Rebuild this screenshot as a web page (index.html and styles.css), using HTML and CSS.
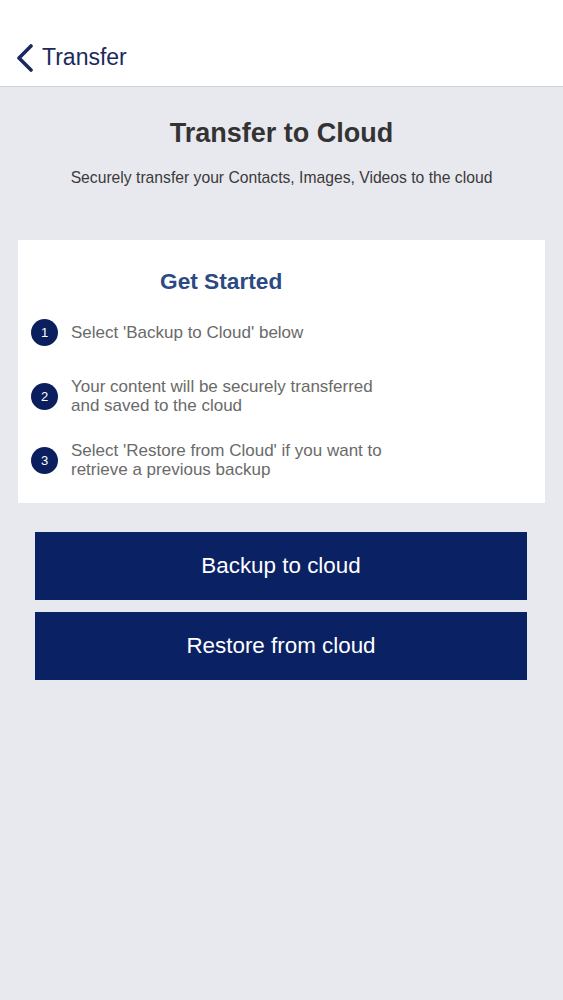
FILE: index.html
```html
<!DOCTYPE html>
<html lang="en">

<head>
    <meta charset="UTF-8">
    <meta name="viewport" content="width=device-width, initial-scale=1.0">
    <title>Transfer to Cloud</title>

    <link rel="stylesheet" href="styles.css">
</head>

<body>
    <header class="topbar">
        <a class="back" href="#">
            <svg viewBox="0 0 18 28" width="18" height="28" stroke="currentColor" stroke-width="3.6" fill="none"
                stroke-linecap="round" stroke-linejoin="round">
                <polyline points="15 2 3 14 15 26"></polyline>
            </svg>
            <span>Transfer</span>
        </a>
    </header>

    <main class="page">
        <h1 class="title">Transfer to Cloud</h1>
        <p class="subtitle">Securely transfer your Contacts, Images, Videos to the cloud</p>

        <section class="card">
            <h2 class="card_title">Get Started</h2>
            <ol class="steps">
                <li class="step">
                    <span class="step_num">1</span>
                    <span class="step_text">Select 'Backup to Cloud' below</span>
                </li>
                <li class="step">
                    <span class="step_num">2</span>
                    <span class="step_text">Your content will be securely transferred<br>and saved to the cloud</span>
                </li>
                <li class="step">
                    <span class="step_num">3</span>
                    <span class="step_text">Select 'Restore from Cloud' if you want to<br>retrieve a previous backup</span>
                </li>
            </ol>
        </section>

        <div class="actions">
            <button data-action="backup">Backup to cloud</button>
            <button data-action="restore">Restore from cloud</button>
        </div>
    </main>
</body>

</html>
```

FILE: styles.css
```css
body {
    margin: 0;
    min-height: 100vh;
    font-family: 'Liberation Sans', Arial, sans-serif;
    background: #e8e9ee;
    color: #333;
}

.topbar {
    height: 78px;
    padding-top: 8px;
    display: flex;
    align-items: center;
    background: #fff;
    border-bottom: 1px solid #cfd0d4;
}

.back {
    display: flex;
    align-items: center;
    margin-top: 21px;
    padding-left: 16px;
    color: #1b2a5c;
    text-decoration: none;
    font-size: 23px;
}

.back svg {
    margin-right: 8px;
}

.page {
    display: flex;
    flex-direction: column;
}

.title {
    margin: 30px 0 0;
    text-align: center;
    font-size: 27px;
    line-height: 32px;
    color: #333;
}

.subtitle {
    margin: 20px 0 0;
    text-align: center;
    font-size: 15.7px;
    line-height: 18px;
    color: #3a3a3a;
}

.card {
    margin: 53px 18px 0;
    padding: 27px 13px 11px;
    background: #fff;
}

.card_title {
    margin: 0 0 5px;
    padding-left: 129px;
    font-size: 22.7px;
    line-height: 28px;
    color: #2c4a82;
}

.steps {
    list-style: none;
    margin: 0;
    padding: 0;
}

.step {
    display: flex;
    align-items: center;
    gap: 13px;
    min-height: 64px;
}

.step_num {
    flex: none;
    display: flex;
    justify-content: center;
    align-items: center;
    width: 27px;
    height: 27px;
    border-radius: 50%;
    background: #0b1f5e;
    color: #fff;
    font-size: 13px;
}

.step_text {
    font-size: 17px;
    line-height: 19px;
    color: #6a6a6a;
}

.actions {
    display: flex;
    flex-direction: column;
    gap: 12px;
    margin: 29px 36px 0 35px;
}

.actions button {
    height: 68px;
    border: none;
    background: #0a2164;
    color: #fff;
    font-family: inherit;
    font-size: 22.4px;
    cursor: pointer;
}
```
